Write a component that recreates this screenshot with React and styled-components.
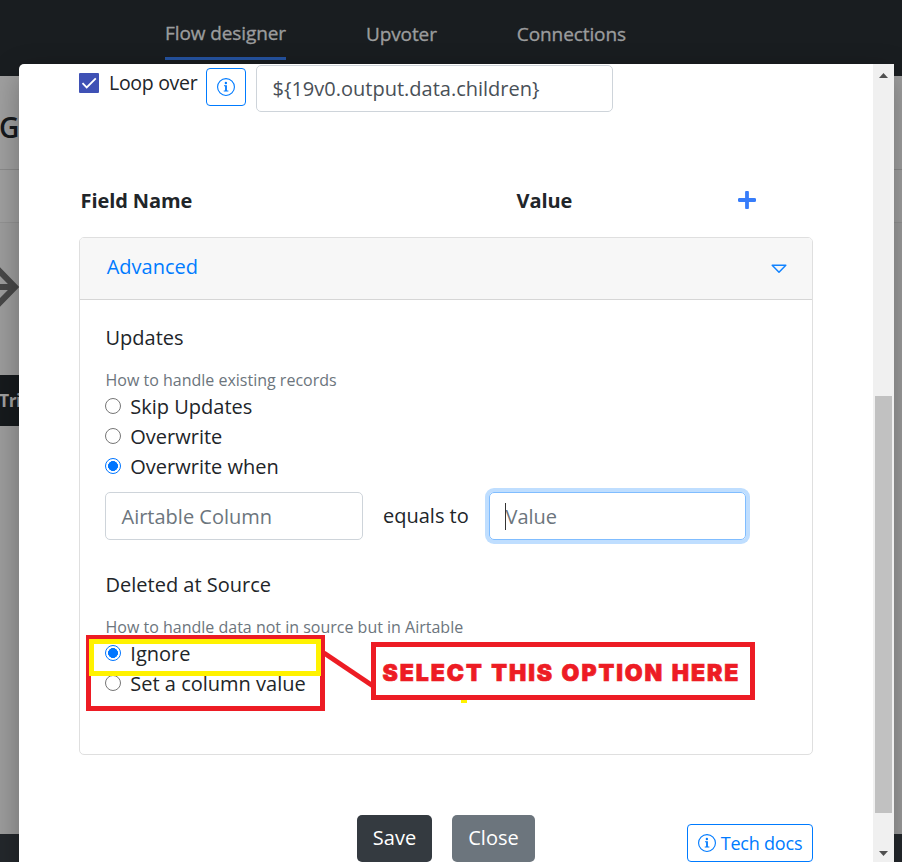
import React from 'react'
import styled, { createGlobalStyle } from 'styled-components'

const GlobalStyle = createGlobalStyle`
* {
  box-sizing: border-box;
}
body {
  margin: 0;
  overflow: hidden;
  font-family: "Open Sans", sans-serif;
  font-size: 20px;
  line-height: 30px;
  color: #212529;
}
`

const InfoIcon = () => (
  <InfoSvg viewBox="0 0 16 16">
    <path d="M8 15A7 7 0 1 1 8 1a7 7 0 0 1 0 14zm0 1A8 8 0 1 0 8 0a8 8 0 0 0 0 16z" />
    <path d="M6.2 6.4h2.6v4.7h1.3v1H6v-1h1.2V7.4h-1z" />
    <circle cx="7.9" cy="4.4" r="1.05" />
  </InfoSvg>
)

const Option = ({ label, checked }) => (
  <OptionRow>
    <Radio $checked={checked} />
    {label}
  </OptionRow>
)

const App = () => {
  return (
    <Page>
      <GlobalStyle />
      <Navbar>
        <NavItem $left={165} $active>Flow designer</NavItem>
        <NavItem $left={80}>Upvoter</NavItem>
        <NavItem $left={80}>Connections</NavItem>
      </Navbar>
      <TitleBar>G</TitleBar>
      <SubBar />
      <Canvas>
        <ArrowSvg viewBox="0 0 19 42">
          <path d="M-20 21H14M-4 1.500L15 21L-4 40.500" fill="none" stroke="#484848" strokeWidth="6" />
        </ArrowSvg>
        <Trigger>Tri</Trigger>
      </Canvas>
      <Footer />

      <Modal>
        <ModalBody>
          <LoopRow>
            <Checkbox viewBox="0 0 20 20">
              <rect width="20" height="20" rx="1" fill="#3f51b5" />
              <path d="M3.500 10.200L7.700 14.500L16.800 5.300" fill="none" stroke="#fff" strokeWidth="1.800" />
            </Checkbox>
            <LoopLabel>Loop over</LoopLabel>
            <InfoButton><InfoIcon /></InfoButton>
            <LoopInput>{'${19v0.output.data.children}'}</LoopInput>
          </LoopRow>

          <FieldHead>
            <FieldName>Field Name</FieldName>
            <FieldValue>Value</FieldValue>
            <PlusSvg viewBox="0 0 18 18">
              <path d="M9 1.500V16.500M1.500 9H16.500" stroke="#377dfa" strokeWidth="3.800" strokeLinecap="round" />
            </PlusSvg>
          </FieldHead>

          <Card>
            <CardHead>
              Advanced
              <CaretSvg viewBox="0 0 16 10">
                <path d="M1.200 1.300H14.800L8 8.300Z" fill="none" stroke="#1283ff" strokeWidth="1.500" strokeLinejoin="round" />
              </CaretSvg>
            </CardHead>
            <CardBody>
              <SectionTitle>Updates</SectionTitle>
              <Hint>How to handle existing records</Hint>
              <Option label="Skip Updates" />
              <Option label="Overwrite" />
              <Option label="Overwrite when" checked />
              <MatchRow>
                <Input $width={258}>Airtable Column</Input>
                <EqualsTo>equals to</EqualsTo>
                <Input $width={257} $focus>
                  <Caret />
                  Value
                </Input>
              </MatchRow>
              <SectionTitle>Deleted at Source</SectionTitle>
              <Hint>How to handle data not in source but in Airtable</Hint>
              <Option label="Ignore" checked />
              <Option label="Set a column value" />
            </CardBody>
          </Card>

          <Actions>
            <Button $bg="#343a40" $width={75}>Save</Button>
            <Button $bg="#6c757d" $width={83}>Close</Button>
            <DocsButton><InfoIcon />Tech docs</DocsButton>
          </Actions>
        </ModalBody>
        <Scrollbar>
          <ScrollArrow viewBox="0 0 9 5"><path d="M0 5L4.500 0L9 5Z" fill="#505050" /></ScrollArrow>
          <Thumb />
          <ScrollArrow viewBox="0 0 9 5"><path d="M0 0L4.500 5L9 0Z" fill="#505050" /></ScrollArrow>
        </Scrollbar>
      </Modal>

      <RedBox />
      <YellowBox />
      <YellowMark />
      <Connector viewBox="0 0 52 40">
        <path d="M1 4L50 37" stroke="#ed1c24" strokeWidth="5" />
      </Connector>
      <Callout>SELECT THIS OPTION HERE</Callout>
    </Page>
  )
}

const Page = styled.div`
position: relative;
width: 902px;
height: 862px;
overflow: hidden;
display: flex;
flex-direction: column;
background: #a0a0a0;
`
const Navbar = styled.div`
height: 76px;
flex: none;
display: flex;
align-items: flex-start;
padding-top: 18px;
background: #191d20;
`
const NavItem = styled.div`
margin-left: ${p => p.$left}px;
height: 42px;
margin-top: ${p => (p.$active ? 0 : 1)}px;
font-size: 19px;
font-weight: 500;
letter-spacing: -0.1px;
white-space: nowrap;
color: #9b9c9d;
-webkit-text-stroke: 0.35px #9b9c9d;
border-bottom: ${p => (p.$active ? '3px solid #24529f' : 'none')};
`
const TitleBar = styled.div`
height: 94px;
flex: none;
padding-top: 36px;
text-indent: -1px;
font-size: 28px;
font-weight: 600;
color: #16191c;
border-bottom: 1px solid #8b8b8b;
`
const SubBar = styled.div`
height: 53px;
flex: none;
border-bottom: 1px solid #939393;
`
const Canvas = styled.div`
flex: 1;
display: flex;
flex-direction: column;
align-items: flex-start;
padding-top: 43px;
background: #9d9d9d;
`
const ArrowSvg = styled.svg`
width: 19px;
height: 42px;
flex: none;
`
const Trigger = styled.div`
width: 60px;
height: 51px;
margin-top: 67px;
line-height: 51px;
text-indent: -1px;
font-size: 17.5px;
font-weight: 700;
letter-spacing: -0.5px;
color: #a0a0a0;
background: #161a1d;
`
const Footer = styled.div`
height: 28px;
flex: none;
background: #24282c;
`
const Modal = styled.div`
position: absolute;
left: 19px;
top: 64px;
width: 875px;
height: 820px;
display: flex;
background: #fff;
border-radius: 5px 0 0 0;
box-shadow: 0 10px 30px rgba(0, 0, 0, 0.3);
overflow: hidden;
`
const ModalBody = styled.div`
width: 854px;
padding: 1px 0 0 60px;
`
const LoopRow = styled.div`
display: flex;
align-items: flex-start;
height: 47px;
`
const Checkbox = styled.svg`
width: 20px;
height: 20px;
margin-top: 8px;
flex: none;
`
const LoopLabel = styled.div`
width: 97px;
margin: 3px 0 0 10px;
white-space: nowrap;
font-size: 19.5px;
letter-spacing: -0.3px;
`
const InfoButton = styled.div`
width: 40px;
height: 38px;
margin-top: 3px;
display: flex;
align-items: center;
justify-content: center;
color: #007bff;
border: 1px solid #007bff;
border-radius: 4px;
`
const InfoSvg = styled.svg`
width: 18px;
height: 18px;
flex: none;
fill: currentColor;
`
const LoopInput = styled.div`
width: 357px;
height: 47px;
margin-left: 10px;
padding-left: 15.5px;
line-height: 45px;
white-space: nowrap;
color: #495057;
border: 1px solid #ced4da;
border-radius: 5px;
`
const FieldHead = styled.div`
display: flex;
align-items: center;
height: 30px;
margin-top: 73px;
font-weight: 700;
`
const FieldName = styled.div`
width: 437px;
padding: 1px 0 0 1.6px;
letter-spacing: -0.1px;
`
const FieldValue = styled.div`
width: 222px;
padding: 1px 0 0 0.6px;
letter-spacing: -0.1px;
`
const PlusSvg = styled.svg`
width: 18px;
height: 18px;
`
const Card = styled.div`
width: 734px;
height: 518px;
margin-top: 22px;
border: 1px solid #dfdfdf;
border-radius: 5px;
`
const CardHead = styled.div`
height: 62px;
display: flex;
align-items: center;
justify-content: space-between;
padding: 0 25.5px 4px 26.7px;
color: #007bff;
background: #f7f7f7;
border-bottom: 1px solid #d6d6d6;
border-radius: 4px 4px 0 0;
`
const CaretSvg = styled.svg`
width: 16px;
height: 10px;
margin-top: 4px;
`
const CardBody = styled.div`
padding: 23px 0 0 25px;
`
const SectionTitle = styled.div`
height: 30px;
padding-left: 0.5px;
`
const Hint = styled.div`
height: 24px;
margin-top: 15px;
padding-left: 0.5px;
font-size: 16px;
line-height: 24px;
color: #6c757d;
`
const OptionRow = styled.div`
display: flex;
align-items: center;
height: 30px;
gap: 9.3px;
`
const Radio = styled.span`
width: 16px;
height: 16px;
margin-top: -2px;
border-radius: 50%;
border: 1px solid ${p => (p.$checked ? '#0075ff' : '#767676')};
background: ${p => (p.$checked ? 'radial-gradient(circle, #0075ff 4.700px, #fff 5.200px)' : '#fff')};
`
const MatchRow = styled.div`
display: flex;
align-items: center;
height: 48px;
margin: 10px 0 30px;
`
const Input = styled.div`
position: relative;
width: ${p => p.$width}px;
height: 48px;
padding-left: 15.5px;
line-height: 47px;
color: #6c757d;
border: 1px solid ${p => (p.$focus ? '#80bdff' : '#ced4da')};
border-radius: 5px;
box-shadow: ${p => (p.$focus ? '0 0 0 4px #bfdeff' : 'none')};
`
const Caret = styled.span`
position: absolute;
left: 15px;
top: 10px;
width: 1px;
height: 27px;
background: #333;
`
const EqualsTo = styled.div`
width: 126px;
padding-left: 20px;
`
const Actions = styled.div`
display: flex;
align-items: flex-start;
height: 47px;
margin-top: 60px;
padding-left: 278px;
gap: 20px;
`
const Button = styled.div`
width: ${p => p.$width}px;
height: 47px;
line-height: 46px;
text-align: center;
color: #fff;
background: ${p => p.$bg};
border-radius: 5px;
`
const DocsButton = styled.div`
width: 126px;
height: 38px;
margin: 9px 0 0 132px;
display: flex;
align-items: center;
justify-content: center;
gap: 5px;
font-size: 18px;
letter-spacing: -0.2px;
white-space: nowrap;
color: #007bff;
border: 1px solid #007bff;
border-radius: 4px;
`
const Scrollbar = styled.div`
width: 21px;
display: flex;
flex-direction: column;
align-items: center;
padding-top: 9px;
background: #f0f0f0;
`
const ScrollArrow = styled.svg`
width: 9px;
height: 5px;
flex: none;
margin-left: -1px;
`
const Thumb = styled.div`
width: 17px;
height: 417px;
flex: none;
margin: 318px 0 38px -1px;
background: #c1c1c1;
`
const RedBox = styled.div`
position: absolute;
left: 86px;
top: 635px;
width: 239px;
height: 76px;
border: 5px solid #ed1c24;
`
const YellowBox = styled.div`
position: absolute;
left: 89px;
top: 639px;
width: 232px;
height: 37px;
border: 5px solid #fff200;
`
const YellowMark = styled.div`
position: absolute;
left: 461px;
top: 699px;
width: 6px;
height: 4px;
background: #fff200;
`
const Connector = styled.svg`
position: absolute;
left: 323px;
top: 649px;
width: 52px;
height: 40px;
`
const Callout = styled.div`
position: absolute;
left: 371px;
top: 642px;
width: 384px;
height: 58px;
padding-left: 6.5px;
line-height: 52px;
font-family: Inter, "Liberation Sans", sans-serif;
font-size: 23px;
font-weight: 900;
letter-spacing: 1.95px;
word-spacing: 1px;
white-space: nowrap;
color: #ed1c24;
-webkit-text-stroke: 0.7px #ed1c24;
background: #fff;
border: 5px solid #ed1c24;
`

export default App
